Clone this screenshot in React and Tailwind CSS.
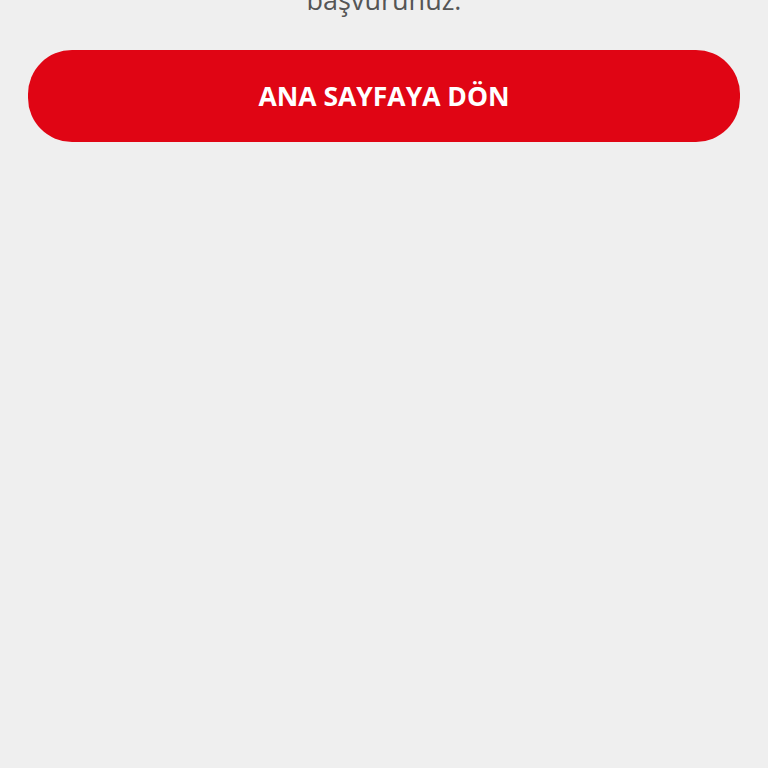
export default function App() {
  return (
    <div
      className="min-h-[768px] w-full overflow-hidden bg-[#efefef] px-[28px]"
      style={{ fontFamily: '"Open Sans", "Noto Sans", sans-serif' }}
    >
      <p className="-mt-[16px] text-center text-[27px] leading-[32px] text-[#555555]">
        başvurunuz.
      </p>
      <button className="mt-[34px] flex h-[92px] w-full items-center justify-center rounded-[44px] bg-[#e00514] pt-[2px] text-[26.5px] font-bold text-white">
        ANA SAYFAYA DÖN
      </button>
    </div>
  );
}
